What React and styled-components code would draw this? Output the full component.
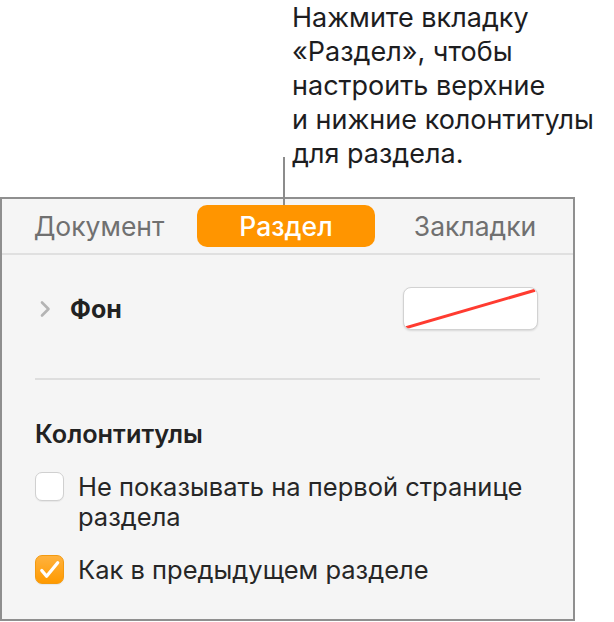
import React from 'react';
import styled, { createGlobalStyle } from 'styled-components';

const GlobalStyle = createGlobalStyle`
  html, body {
    margin: 0;
    padding: 0;
    background: #ffffff;
  }
  body {
    font-family: Inter, Roboto, 'Noto Sans', sans-serif;
    -webkit-font-smoothing: antialiased;
  }
`;

function Chevron() {
  return (
    <svg width="12" height="18" viewBox="0 0 12 18">
      <path d="M3 2.5 L9.5 9 L3 15.5" fill="none" stroke="#b4b4b4" strokeWidth="2.6" strokeLinecap="round" strokeLinejoin="round" />
    </svg>
  );
}

function Check() {
  return (
    <svg width="28" height="28" viewBox="0 0 28 28">
      <path d="M6 14.5 L11 20.5 L22.5 6.5" fill="none" stroke="#ffffff" strokeWidth="3.4" strokeLinecap="round" strokeLinejoin="round" />
    </svg>
  );
}

function App() {
  return (
    <Page>
      <GlobalStyle />
      <Callout>
        Нажмите вкладку<br />
        «Раздел», чтобы<br />
        настроить верхние<br />
        и нижние колонтитулы<br />
        для раздела.
      </Callout>
      <Leader />
      <Panel>
        <TabBar>
          <Tab width={164}>Документ</Tab>
          <Tab width={178} active>Раздел</Tab>
          <Tab width={168}>Закладки</Tab>
        </TabBar>
        <Body>
          <FillRow>
            <Disclosure>
              <Chevron />
              <RowLabel>Фон</RowLabel>
            </Disclosure>
            <ColorWell>
              <svg width="135" height="43" viewBox="0 0 135 43">
                <line x1="2" y1="40" x2="133" y2="2" stroke="#ff3b30" strokeWidth="3" />
              </svg>
            </ColorWell>
          </FillRow>
          <Divider />
          <SectionTitle>Колонтитулы</SectionTitle>
          <CheckRow>
            <Box />
            <CheckText>Не показывать на первой странице<br />раздела</CheckText>
          </CheckRow>
          <CheckRow>
            <Box checked>
              <Check />
            </Box>
            <CheckText>Как в предыдущем разделе</CheckText>
          </CheckRow>
        </Body>
      </Panel>
    </Page>
  );
}

export default App;

const Page = styled.div`
  position: relative;
  width: 614px;
  height: 622px;
  overflow: hidden;
`;

const Callout = styled.div`
  box-sizing: border-box;
  height: 197px;
  padding: 1px 0 0 292px;
  font-size: 27px;
  line-height: 34px;
  color: #1d1d1f;
  white-space: nowrap;
`;

const Leader = styled.div`
  position: absolute;
  left: 283px;
  top: 157px;
  width: 2px;
  height: 48px;
  background: #8c8c8c;
  z-index: 2;
`;

const Panel = styled.div`
  box-sizing: border-box;
  width: 575px;
  height: 424px;
  border: 2px solid #8f8f8f;
  background: #f5f5f5;
`;

const TabBar = styled.div`
  display: flex;
  gap: 16px;
  padding: 6px 0 6px 15px;
  border-bottom: 2px solid #e0e0e0;
`;

const Tab = styled.div`
  width: ${p => p.width}px;
  height: 42px;
  border-radius: 10px;
  display: flex;
  align-items: center;
  justify-content: center;
  font-size: 26.5px;
  font-weight: ${p => (p.active ? 500 : 400)};
  color: ${p => (p.active ? '#ffffff' : '#707070')};
  background: ${p => (p.active ? '#ff9500' : 'transparent')};
  white-space: nowrap;
`;

const Body = styled.div`
  padding: 0 33px;
`;

const FillRow = styled.div`
  margin-top: 32px;
  height: 43px;
  display: flex;
  align-items: center;
  justify-content: space-between;
`;

const Disclosure = styled.div`
  display: flex;
  align-items: center;
  gap: 19px;
  padding-left: 4px;
`;

const RowLabel = styled.span`
  font-size: 25px;
  font-weight: 700;
  color: #222222;
`;

const ColorWell = styled.div`
  box-sizing: border-box;
  width: 135px;
  height: 43px;
  margin-right: 2px;
  border-radius: 8px;
  background: #ffffff;
  border: 1px solid #d2d2d2;
  box-shadow: 0 1px 2px rgba(0, 0, 0, 0.12);
  overflow: hidden;
  display: flex;

  svg {
    display: block;
  }
`;

const Divider = styled.div`
  margin-top: 48px;
  height: 2px;
  background: #dedede;
`;

const SectionTitle = styled.div`
  margin-top: 39px;
  font-size: 25.3px;
  line-height: 30px;
  font-weight: 600;
  color: #222222;
`;

const CheckRow = styled.div`
  display: flex;
  align-items: flex-start;
  gap: 14px;
  margin-top: 23px;
`;

const Box = styled.div`
  box-sizing: border-box;
  flex: none;
  width: 29px;
  height: 29px;
  border-radius: 7px;
  background: ${p => (p.checked ? 'linear-gradient(#ffb23e, #ff9a00)' : '#ffffff')};
  border: 1px solid ${p => (p.checked ? '#f39a10' : '#d0d0d0')};
  box-shadow: 0 1px 1px rgba(0, 0, 0, 0.06);
  display: flex;
  align-items: center;
  justify-content: center;
`;

const CheckText = styled.div`
  font-size: 25.5px;
  line-height: 30px;
  color: #262626;
  white-space: nowrap;
`;
